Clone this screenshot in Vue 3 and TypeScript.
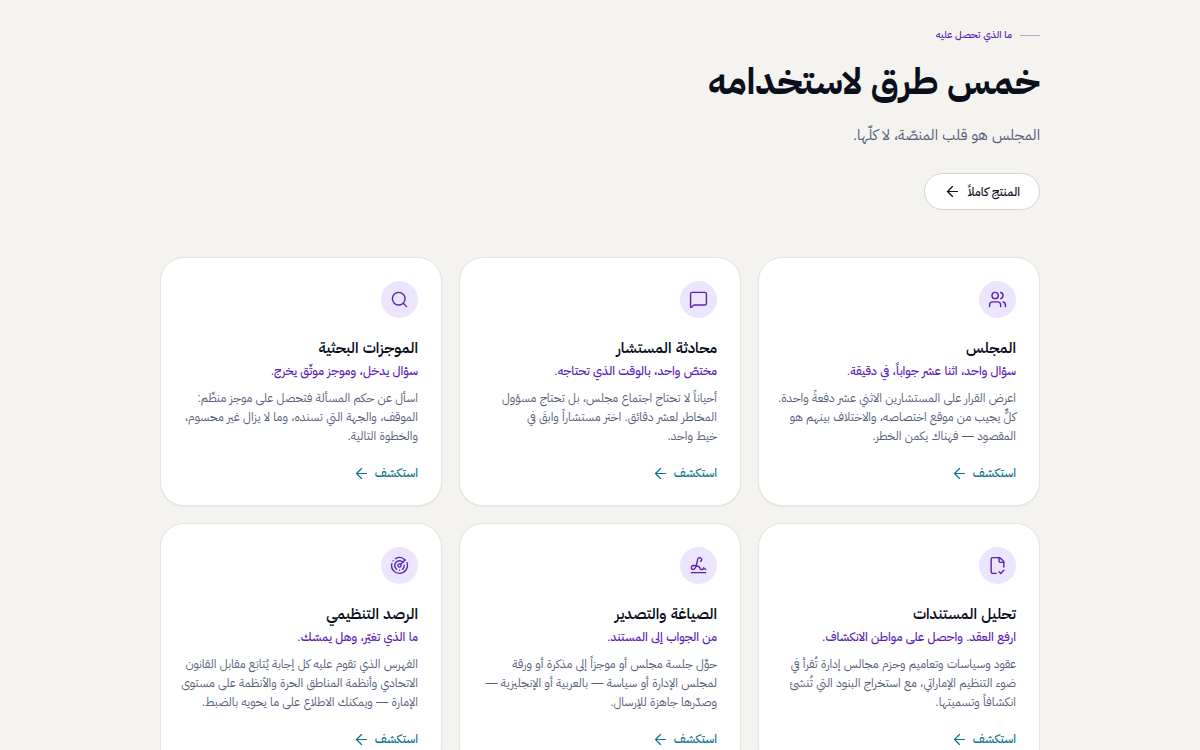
<script setup lang="ts">
interface Feature {
  title: string
  tagline: string
  lines: string[]
  icon: string[]
}

const features: Feature[] = [
  {
    title: 'المجلس',
    tagline: 'سؤال واحد، اثنا عشر جواباً، في دقيقة.',
    lines: [
      'اعرض القرار على المستشارين الاثني عشر دفعةً واحدة.',
      'كلٌّ يجيب من موقع اختصاصه، والاختلاف بينهم هو',
      'المقصود — فهناك يكمن الخطر.',
    ],
    icon: [
      'M16 21v-2a4 4 0 0 0-4-4H6a4 4 0 0 0-4 4v2',
      'M16 3.128a4 4 0 0 1 0 7.744',
      'M22 21v-2a4 4 0 0 0-3-3.87',
      'M5 7a4 4 0 1 0 8 0a4 4 0 1 0-8 0',
    ],
  },
  {
    title: 'محادثة المستشار',
    tagline: 'مختصّ واحد، بالوقت الذي تحتاجه.',
    lines: [
      'أحياناً لا تحتاج اجتماع مجلس، بل تحتاج مسؤول',
      'المخاطر لعشر دقائق. اختر مستشاراً وابقَ في',
      'خيط واحد.',
    ],
    icon: [
      'M22 17a2 2 0 0 1-2 2H6.828a2 2 0 0 0-1.414.586l-2.202 2.202A.71.71 0 0 1 2 21.286V5a2 2 0 0 1 2-2h16a2 2 0 0 1 2 2z',
    ],
  },
  {
    title: 'الموجزات البحثية',
    tagline: 'سؤال يدخل، وموجز موثّق يخرج.',
    lines: [
      'اسأل عن حكم المسألة فتحصل على موجز منظّم:',
      'الموقف، والجهة التي تسنده، وما لا يزال غير محسوم،',
      'والخطوة التالية.',
    ],
    icon: ['m21 21-4.34-4.34', 'M3 11a8 8 0 1 0 16 0a8 8 0 1 0-16 0'],
  },
  {
    title: 'تحليل المستندات',
    tagline: 'ارفع العقد. واحصل على مواطن الانكشاف.',
    lines: [
      'عقود وسياسات وتعاميم وحزم مجالس إدارة تُقرأ في',
      'ضوء التنظيم الإماراتي، مع استخراج البنود التي تُنشئ',
      'انكشافاً وتسميتها.',
    ],
    icon: [
      'M10.5 22H6a2 2 0 0 1-2-2V4a2 2 0 0 1 2-2h8a2.4 2.4 0 0 1 1.706.706l3.588 3.588A2.4 2.4 0 0 1 20 8v6',
      'M14 2v5a1 1 0 0 0 1 1h5',
      'm14 20 2 2 4-4',
    ],
  },
  {
    title: 'الصياغة والتصدير',
    tagline: 'من الجواب إلى المستند.',
    lines: [
      'حوِّل جلسة مجلس أو موجزاً إلى مذكرة أو ورقة',
      'لمجلس الإدارة أو سياسة — بالعربية أو الإنجليزية —',
      'وصدّرها جاهزة للإرسال.',
    ],
    icon: [
      'm21 17-2.156-1.868A.5.5 0 0 0 18 15.5v.5a1 1 0 0 1-1 1h-2a1 1 0 0 1-1-1c0-2.545-3.991-3.97-8.5-4a1 1 0 0 0 0 5c4.153 0 4.745-11.295 5.708-13.5a2.5 2.5 0 1 1 3.31 3.284',
      'M3 21h18',
    ],
  },
  {
    title: 'الرصد التنظيمي',
    tagline: 'ما الذي تغيّر، وهل يمسّك.',
    lines: [
      'الفهرس الذي تقوم عليه كل إجابة يُتابَع مقابل القانون',
      'الاتحادي وأنظمة المناطق الحرة والأنظمة على مستوى',
      'الإمارة — ويمكنك الاطلاع على ما يحويه بالضبط.',
    ],
    icon: [
      'M19.07 4.93A10 10 0 0 0 6.99 3.34',
      'M4 6h.01',
      'M2.29 9.62A10 10 0 1 0 21.31 8.35',
      'M16.24 7.76A6 6 0 1 0 8.23 16.67',
      'M12 18h.01',
      'M17.99 11.66A6 6 0 0 1 15.77 16.67',
      'M10 12a2 2 0 1 0 4 0a2 2 0 1 0-4 0',
      'm13.41 10.59 5.66-5.66',
    ],
  },
]
</script>

<template>
  <main class="page" dir="rtl" lang="ar">
    <header class="intro">
      <p class="eyebrow"><span class="rule"></span>ما الذي تحصل عليه</p>
      <h1>خمس طرق لاستخدامه</h1>
      <p class="lead">المجلس هو قلب المنصّة، لا كلّها.</p>
      <a class="pill" href="#product">
        المنتج كاملاً
        <svg class="arrow" viewBox="0 0 24 24" aria-hidden="true">
          <path d="m12 19-7-7 7-7" />
          <path d="M19 12H5" />
        </svg>
      </a>
    </header>

    <section class="grid">
      <article v-for="feature in features" :key="feature.title" class="card">
        <span class="badge">
          <svg viewBox="0 0 24 24" aria-hidden="true">
            <path v-for="d in feature.icon" :key="d" :d="d" />
          </svg>
        </span>
        <h2>{{ feature.title }}</h2>
        <p class="tagline">{{ feature.tagline }}</p>
        <p class="body">
          <span v-for="line in feature.lines" :key="line">{{ line }}</span>
        </p>
        <a class="more" href="#explore">
          استكشف
          <svg class="arrow" viewBox="0 0 24 24" aria-hidden="true">
            <path d="m12 19-7-7 7-7" />
            <path d="M19 12H5" />
          </svg>
        </a>
      </article>
    </section>
  </main>
</template>

<style>
body {
  margin: 0;
  background: #f4f3ef;
}
</style>

<style scoped>
.page {
  box-sizing: border-box;
  max-width: 928px;
  margin: 0 auto;
  padding: 26px 24px 48px;
  font-family: 'Liberation Sans', 'IBM Plex Sans Arabic', 'DejaVu Sans Condensed', 'DejaVu Sans', sans-serif;
  color: #0b0f1c;
}

h1,
h2,
p {
  margin: 0;
}

svg {
  flex: none;
  fill: none;
  stroke: currentColor;
  stroke-width: 1.75;
  stroke-linecap: round;
  stroke-linejoin: round;
}

.intro {
  display: flex;
  flex-direction: column;
  align-items: flex-start;
  margin-bottom: 47px;
}

.eyebrow {
  display: flex;
  align-items: center;
  gap: 8px;
  font-size: 10px;
  font-weight: 500;
  line-height: 18px;
  color: #5b21b6;
}

.rule {
  width: 20px;
  height: 1px;
  background: #b3a9c4;
}

h1 {
  margin-top: 14px;
  font-family: 'IBM Plex Sans Arabic', 'DejaVu Sans Condensed', 'DejaVu Sans', sans-serif;
  font-size: 37px;
  font-weight: 700;
  line-height: 48px;
}

.lead {
  margin-top: 16px;
  font-size: 15px;
  line-height: 26px;
  color: #56607a;
}

.pill {
  display: flex;
  align-items: center;
  gap: 7px;
  box-sizing: border-box;
  height: 37px;
  margin-top: 25px;
  padding: 0 19px;
  border: 1px solid #d4d3d2;
  border-radius: 19px;
  background: #fff;
  font-size: 12px;
  font-weight: 500;
  color: #0b0f1c;
  text-decoration: none;
}

.arrow {
  width: 17px;
  height: 17px;
}

.grid {
  display: grid;
  grid-template-columns: repeat(3, minmax(0, 1fr));
  gap: 17px;
}

.card {
  display: flex;
  flex-direction: column;
  align-items: flex-start;
  padding: 23px;
  border: 1px solid #e5e4e2;
  border-radius: 24px;
  background: #fff;
  box-shadow: 0 1px 2px rgba(11, 15, 28, 0.06);
}

.badge {
  display: grid;
  place-items: center;
  width: 37px;
  height: 37px;
  border-radius: 50%;
  background: #ebe5fd;
  color: #5b21b6;
}

.badge svg {
  width: 19px;
  height: 19px;
}

h2 {
  margin-top: 18px;
  font-size: 15px;
  font-weight: 600;
  line-height: 24px;
}

.tagline {
  font-size: 12px;
  font-weight: 500;
  line-height: 22px;
  color: #5b21b6;
}

.body {
  margin-top: 7px;
  font-size: 12px;
  line-height: 19px;
  color: #56607a;
}

.body span {
  display: block;
  white-space: nowrap;
}

.more {
  display: flex;
  align-items: center;
  gap: 5px;
  margin-top: 18px;
  font-size: 12px;
  font-weight: 500;
  line-height: 18px;
  color: #0e7490;
  text-decoration: none;
}
</style>
